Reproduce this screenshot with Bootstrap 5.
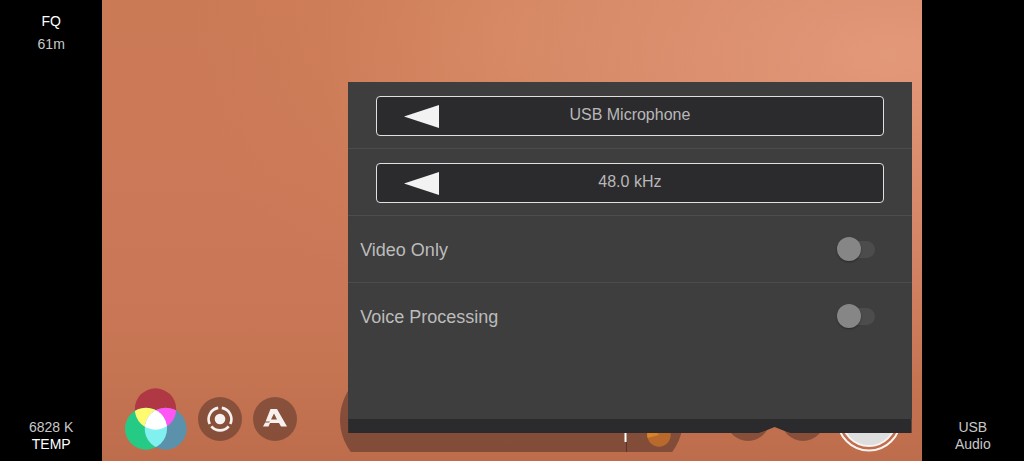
<!DOCTYPE html>
<html lang="en">
<head>
<meta charset="utf-8">
<meta name="viewport" content="width=device-width, initial-scale=1">
<title>Camera audio settings</title>
<link href="https://cdn.jsdelivr.net/npm/bootstrap@5.3.0/dist/css/bootstrap.min.css" rel="stylesheet">
<style>
  body { background: #000; color: #c8c8c8; font-family: "Liberation Sans", Arial, sans-serif; }
  .rail { width: 10%; font-size: 14px; line-height: 17px; }
  .rail-top { padding-top: 13px; gap: 6px; }
  .rail-bottom { padding-bottom: 8px; }
  .rail-label { color: #fff; }
  .preview {
    background:
      radial-gradient(ellipse 70% 70% at 96% 12%, rgba(230,158,128,.85), rgba(226,146,114,0) 100%),
      radial-gradient(ellipse 40% 60% at 50% 8%, rgba(212,134,92,.6), rgba(212,134,92,0) 100%),
      linear-gradient(180deg, #cb7a56 0%, #cb7858 50%, #c67553 80%, #bd6d4c 100%);
  }
  .controls { gap: 11px; padding: 0 20px 9px 23px; }
  .glass { background: rgba(58,36,32,.42); }
  .tool { width: 44px; height: 44px; }
  .meter { height: 65px; margin: 0 32px; }
  .meter::before { content: ""; position: absolute; inset: -22px 0; border-radius: 55px; background: rgba(58,36,32,.46); }
  .meter svg { position: relative; }
  .panel { left: 30%; right: 10px; bottom: 28px; }
  .panel-main { background: #3e3e3e; min-height: 337px; }
  .panel-row { height: 67px; border-bottom: 1px solid #4c4c4c; }
  .panel-row:last-child { border-bottom: 0; }
  .choice-row { padding: 14px 28px 12px; }
  .choice {
    display: grid; grid-template-columns: 62px 1fr 62px; align-items: center;
    height: 40px; padding: 0; border: 1px solid #e0e0e0; border-radius: 4px;
    background: #2b2b2d; color: #b8b8b8; font-size: 16px; line-height: 20px;
  }
  .choice svg { justify-self: end; }
  .choice span { padding-bottom: 2px; }
  .switch-row { padding: 0 37px 0 12px; font-size: 18px; color: #bcbcbc; }
  .switch-row label { padding-top: 2px; }
  .toggle {
    appearance: none; width: 35px; height: 17px; margin: 0; border-radius: 9px;
    background: #4c4c4c; position: relative;
  }
  .toggle::before {
    content: ""; position: absolute; left: -3px; top: -4px; width: 24px; height: 24px;
    border-radius: 50%; background: #868686; box-shadow: 0 1px 2px rgba(0,0,0,.35);
  }
  .toggle:checked::before { left: 14px; background: #ddd; }
  .panel-foot {
    height: 14px; background: #2b2b2d;
    clip-path: polygon(0 0, 100% 0, 100% 100%, calc(100% - 121px) 100%, calc(100% - 127px) 12px, calc(100% - 137px) 8px, calc(100% - 147px) 12px, calc(100% - 153px) 100%, 0 100%);
  }
</style>
</head>
<body>
<div class="d-flex min-vh-100">
  <aside class="rail d-flex flex-column justify-content-between text-center">
    <div class="rail-top d-flex flex-column">
      <div class="rail-label">FQ</div>
      <div>61m</div>
    </div>
    <div class="rail-bottom">
      <div>6828 K</div>
      <div class="rail-label">TEMP</div>
    </div>
  </aside>

  <main class="preview position-relative flex-grow-1 d-flex flex-column justify-content-end">
    <div class="controls d-flex align-items-center">
      <svg width="62" height="62" viewBox="0 0 62 62" role="img" aria-label="Colour">
        <defs>
          <clipPath id="red"><circle cx="30.500" cy="21" r="20.700"/></clipPath>
          <clipPath id="green"><circle cx="21" cy="40.700" r="21"/></clipPath>
          <clipPath id="blue"><circle cx="40.700" cy="40.700" r="21"/></clipPath>
        </defs>
        <circle cx="30.500" cy="21" r="20.700" fill="#b03844"/>
        <circle cx="21" cy="40.700" r="21" fill="#25cb85"/>
        <circle cx="40.700" cy="40.700" r="21" fill="#5c91ac"/>
        <circle cx="30.500" cy="21" r="20.700" fill="#fffb70" clip-path="url(#green)"/>
        <circle cx="30.500" cy="21" r="20.700" fill="#ff55f5" clip-path="url(#blue)"/>
        <circle cx="21" cy="40.700" r="21" fill="#80f1ee" clip-path="url(#blue)"/>
        <g clip-path="url(#red)"><circle cx="21" cy="40.700" r="21" fill="#fff" clip-path="url(#blue)"/></g>
      </svg>
      <button type="button" class="tool glass btn p-0 border-0 rounded-circle flex-shrink-0" aria-label="Focus">
        <svg class="d-block" width="44" height="44" viewBox="0 0 44 44" fill="none" stroke="#f6f1ee" stroke-width="2.600">
          <circle cx="22" cy="22" r="5.300" fill="#f6f1ee" stroke="none"/>
          <path d="M20.200 10.900A11.400 11.400 0 0 0 11.700 27M23.800 10.900A11.400 11.400 0 0 1 32.300 27M13.300 29.300A11.400 11.400 0 0 0 30.700 29.300"/>
        </svg>
      </button>
      <button type="button" class="tool glass btn p-0 border-0 rounded-circle flex-shrink-0" aria-label="Auto">
        <svg class="d-block" width="44" height="44" viewBox="0 0 44 44" fill="#f6f1ee">
          <path fill-rule="evenodd" d="M17.500 12H24L34 29.500H28L26 26H17L15.500 29.500H10L12.200 25.600H16L17 24.400H12.600ZM21 16.500L18 22.500H24Z"/>
        </svg>
      </button>
      <div class="meter flex-grow-1 position-relative overflow-hidden d-flex justify-content-end">
        <svg width="60" height="65" viewBox="0 0 60 65" aria-hidden="true">
          <path d="M2.500 0V55" stroke="#fff" stroke-width="2"/>
          <path d="M3.500 55V65" stroke="#55352b"/>
          <circle cx="36" cy="48" r="11.700" fill="#b9692b"/>
          <path d="M36 48L24.500 51A11.700 11.700 0 0 1 28 39.500Z" fill="#d98328"/>
        </svg>
      </div>
      <span class="tool glass rounded-circle flex-shrink-0"></span>
      <span class="tool glass rounded-circle flex-shrink-0"></span>
      <button type="button" class="btn p-0 border-0 flex-shrink-0" aria-label="Record">
        <svg class="d-block" width="66" height="66" viewBox="0 0 66 66">
          <circle cx="33" cy="33" r="31.500" fill="none" stroke="#fbf3ef" stroke-width="2"/>
          <circle cx="33" cy="33" r="27" fill="#dedede" stroke="#fbf3ef" stroke-width="2"/>
        </svg>
      </button>
    </div>

    <section class="panel position-absolute">
      <div class="panel-main">
        <div class="panel-row choice-row">
          <button type="button" class="choice w-100">
            <svg width="35" height="23" viewBox="0 0 35 23"><path d="M0 11.500L35 0V23Z" fill="#f2f2f2"/></svg>
            <span>USB Microphone</span>
          </button>
        </div>
        <div class="panel-row choice-row">
          <button type="button" class="choice w-100">
            <svg width="35" height="23" viewBox="0 0 35 23"><path d="M0 11.500L35 0V23Z" fill="#f2f2f2"/></svg>
            <span>48.0 kHz</span>
          </button>
        </div>
        <div class="panel-row switch-row d-flex align-items-center justify-content-between">
          <label for="videoOnly">Video Only</label>
          <input class="toggle" type="checkbox" role="switch" id="videoOnly">
        </div>
        <div class="panel-row switch-row d-flex align-items-center justify-content-between">
          <label for="voiceProcessing">Voice Processing</label>
          <input class="toggle" type="checkbox" role="switch" id="voiceProcessing">
        </div>
      </div>
      <div class="panel-foot"></div>
    </section>
  </main>

  <aside class="rail d-flex flex-column justify-content-end text-center">
    <div class="rail-bottom">
      <div>USB</div>
      <div>Audio</div>
    </div>
  </aside>
</div>
<script src="https://cdn.jsdelivr.net/npm/bootstrap@5.3.0/dist/js/bootstrap.bundle.min.js"></script>
</body>
</html>
